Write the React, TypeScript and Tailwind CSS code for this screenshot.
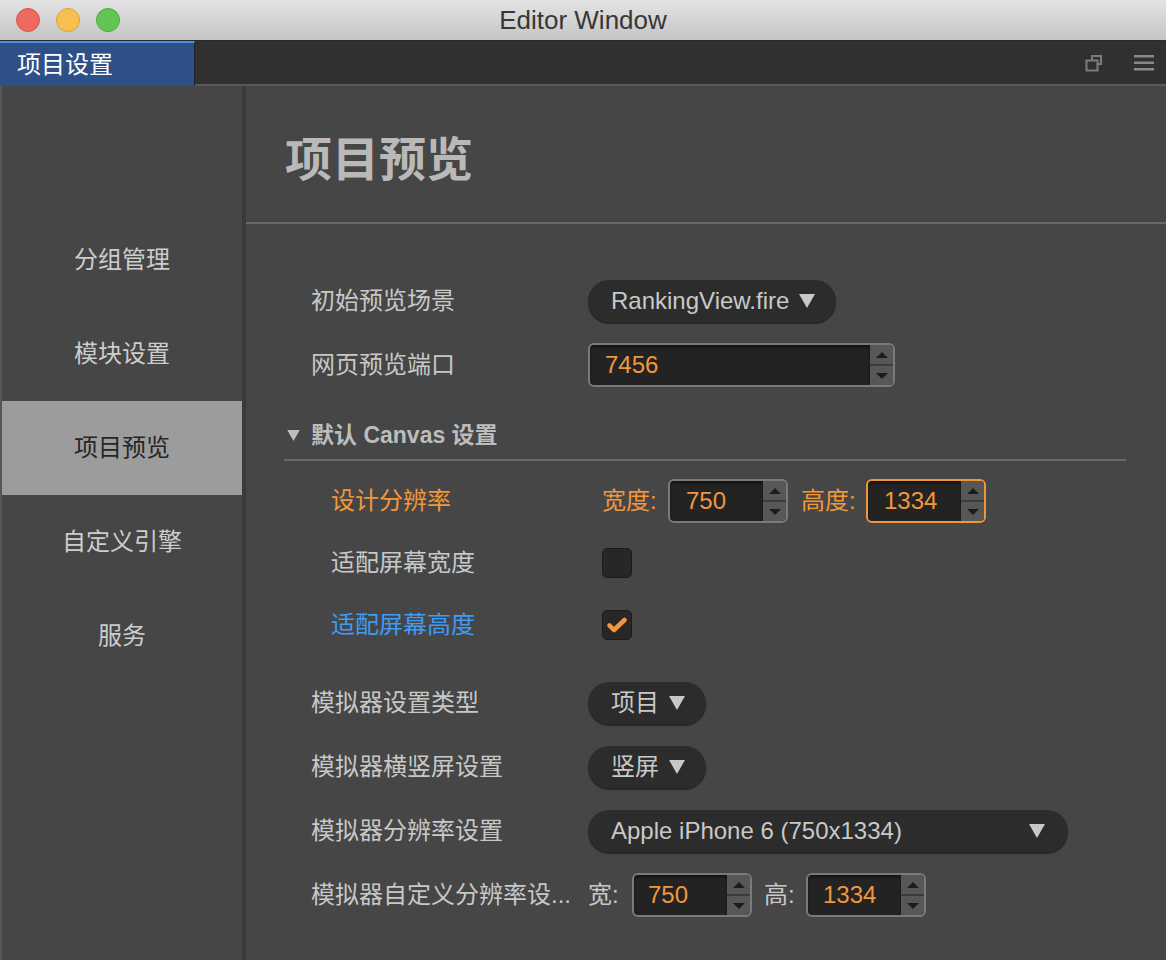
import React from 'react';

const font = "font-['Liberation_Sans','Noto_Sans_CJK_SC',sans-serif]";

function Caret({ className }: { className?: string }) {
  return (
    <svg viewBox="0 0 16 14" className={className}>
      <path d="M0 0h16L8 14z" fill="currentColor" />
    </svg>
  );
}

function Pill({ text, wide }: { text: string; wide?: boolean }) {
  return (
    <div
      className={`flex h-[42px] items-center rounded-full bg-[#2c2c2c] pl-[23px] pr-[21px] text-[24px] text-[#c8c8c8] shadow-[0_2px_1px_rgba(0,0,0,0.45)] ${
        wide ? 'w-[480px] justify-between pr-[23px]' : 'gap-[10px]'
      }`}
    >
      <span>{text}</span>
      <Caret className="h-[14px] w-[16px] text-[#c8c8c8]" />
    </div>
  );
}

function NumberBox({
  value,
  width,
  focused,
  pad,
}: {
  value: string;
  width: string;
  focused?: boolean;
  pad: string;
}) {
  return (
    <div
      className={`flex h-[44px] ${width} overflow-hidden rounded-[6px] border-2 ${
        focused ? 'border-[#f0963a]' : 'border-[#7a7a7a]'
      } bg-[#232323]`}
    >
      <div
        className={`flex flex-1 items-center ${pad} text-[24px] text-[#f2973b] shadow-[inset_0_2px_3px_rgba(0,0,0,0.5)]`}
      >
        {value}
      </div>
      <div className="flex w-[23px] flex-col bg-[#575757]">
        <div className="flex flex-1 items-center justify-center border-b-2 border-[#3c3c3c]">
          <svg viewBox="0 0 12 6" className="h-[6px] w-[12px]">
            <path d="M0 6h12L6 0z" fill="#1c1c1c" />
          </svg>
        </div>
        <div className="flex flex-1 items-center justify-center">
          <svg viewBox="0 0 12 6" className="h-[6px] w-[12px]">
            <path d="M0 0h12L6 6z" fill="#1c1c1c" />
          </svg>
        </div>
      </div>
    </div>
  );
}

function Checkbox({ checked }: { checked?: boolean }) {
  return (
    <div className="flex h-[30px] w-[30px] items-center justify-center rounded-[5px] border border-[#1b1b1b] bg-[#272727]">
      {checked && (
        <svg viewBox="0 0 20 16" className="h-[16px] w-[20px]">
          <path
            d="M2.5 8.5l4.5 4.5L17.5 3"
            fill="none"
            stroke="#f2973b"
            strokeWidth="4.5"
            strokeLinecap="round"
            strokeLinejoin="round"
          />
        </svg>
      )}
    </div>
  );
}

function Row({ label, children }: { label: string; children: React.ReactNode }) {
  return (
    <div className="flex h-[64px] items-center pl-[65px]">
      <div className="w-[277px] whitespace-nowrap text-[24px] text-[#c8c8c8]">{label}</div>
      {children}
    </div>
  );
}

function SubRow({
  label,
  color,
  children,
}: {
  label: string;
  color: string;
  children: React.ReactNode;
}) {
  return (
    <div className="flex h-[62px] items-center pl-[85px]">
      <div className={`w-[271px] whitespace-nowrap text-[24px] ${color}`}>{label}</div>
      {children}
    </div>
  );
}

const navItems = ['分组管理', '模块设置', '项目预览', '自定义引擎', '服务'];

export default function App() {
  return (
    <div className={`flex h-[960px] w-[1166px] flex-col overflow-hidden bg-[#464646] ${font}`}>
      {/* title bar */}
      <div className="relative flex h-[41px] items-center justify-center border-b border-[#2a2a2a] bg-gradient-to-b from-[#e4e4e4] to-[#c4c4c4]">
        <div className="absolute left-[16px] top-[8px] flex gap-[16px]">
          <div className="h-[24px] w-[24px] rounded-full border border-[#d9554b] bg-[#ef6a5e]" />
          <div className="h-[24px] w-[24px] rounded-full border border-[#dba23a] bg-[#f6bf4f]" />
          <div className="h-[24px] w-[24px] rounded-full border border-[#4fa83f] bg-[#61c554]" />
        </div>
        <span className="text-[26px] text-[#373737]">Editor Window</span>
      </div>

      {/* tab bar */}
      <div className="flex h-[45px] bg-[#303030]">
        <div className="flex w-[195px] items-center border-r border-t-2 border-r-[#232323] border-t-[#4a90e2] bg-[#2e5088] pl-[17px] text-[24px] text-white">
          项目设置
        </div>
        <div className="flex flex-1 items-center justify-end gap-[30px] border-b-2 border-[#5a5a5a] pr-[12px]">
          <svg viewBox="0 0 20 20" className="h-[20px] w-[20px]">
            <rect x="7" y="2" width="11" height="10" fill="#7c7c7c" />
            <rect x="9" y="4" width="7" height="6" fill="#303030" />
            <rect x="2.5" y="7.5" width="11" height="10" fill="#303030" stroke="#7c7c7c" strokeWidth="2" />
          </svg>
          <svg viewBox="0 0 20 18" className="h-[18px] w-[20px]">
            <rect x="0" y="1" width="20" height="2.5" fill="#8a8a8a" />
            <rect x="0" y="7.5" width="20" height="2.5" fill="#8a8a8a" />
            <rect x="0" y="14" width="20" height="2.5" fill="#8a8a8a" />
          </svg>
        </div>
      </div>

      <div className="flex flex-1">
        {/* sidebar */}
        <div className="w-[246px] border-l-2 border-r-4 border-l-[#565656] border-r-[#3a3a3a] bg-[#464646] pt-[127px]">
          {navItems.map((item) => (
            <div
              key={item}
              className={`flex h-[94px] items-center justify-center text-[24px] ${
                item === '项目预览' ? 'bg-[#9c9c9c] text-[#262626]' : 'text-[#cdcdcd]'
              }`}
            >
              {item}
            </div>
          ))}
        </div>

        {/* main panel */}
        <div className="flex-1">
          <div className="flex h-[138px] items-center border-b-2 border-[#696969] pl-[39px] pt-[12px] text-[47px] font-bold text-[#b9b9b9]">
            项目预览
          </div>

          <div className="pt-[45px]">
            <Row label="初始预览场景">
              <Pill text="RankingView.fire" />
            </Row>
            <Row label="网页预览端口">
              <NumberBox value="7456" width="w-[307px]" pad="pl-[15px]" />
            </Row>

            <div className="ml-[38px] mr-[40px] flex h-[64px] items-center gap-[11px] border-b-2 border-[#6a6a6a] pl-[3px] pt-[14px] text-[23px] font-bold text-[#bdbdbd]">
              <Caret className="h-[11px] w-[13px] text-[#bdbdbd]" />
              <span>默认 Canvas 设置</span>
            </div>

            <div className="pt-[9px]">
              <SubRow label="设计分辨率" color="text-[#f2973b]">
                <div className="flex items-center whitespace-nowrap text-[24px] text-[#f2973b]">
                  <span className="w-[66px]">宽度:</span>
                  <NumberBox value="750" width="w-[120px]" pad="pl-[16px]" />
                  <span className="w-[78px] pl-[13px]">高度:</span>
                  <NumberBox value="1334" width="w-[120px]" pad="pl-[16px]" focused />
                </div>
              </SubRow>
              <SubRow label="适配屏幕宽度" color="text-[#c8c8c8]">
                <Checkbox />
              </SubRow>
              <SubRow label="适配屏幕高度" color="text-[#3e9cf2]">
                <Checkbox checked />
              </SubRow>
            </div>

            <div className="pt-[15px]">
              <Row label="模拟器设置类型">
                <Pill text="项目" />
              </Row>
              <Row label="模拟器横竖屏设置">
                <Pill text="竖屏" />
              </Row>
              <Row label="模拟器分辨率设置">
                <Pill text="Apple iPhone 6 (750x1334)" wide />
              </Row>
              <Row label="模拟器自定义分辨率设...">
                <div className="flex items-center whitespace-nowrap text-[24px] text-[#c8c8c8]">
                  <span className="w-[44px]">宽:</span>
                  <NumberBox value="750" width="w-[120px]" pad="pl-[14px]" />
                  <span className="w-[54px] pl-[12px]">高:</span>
                  <NumberBox value="1334" width="w-[120px]" pad="pl-[15px]" />
                </div>
              </Row>
            </div>
          </div>
        </div>
      </div>
    </div>
  );
}
